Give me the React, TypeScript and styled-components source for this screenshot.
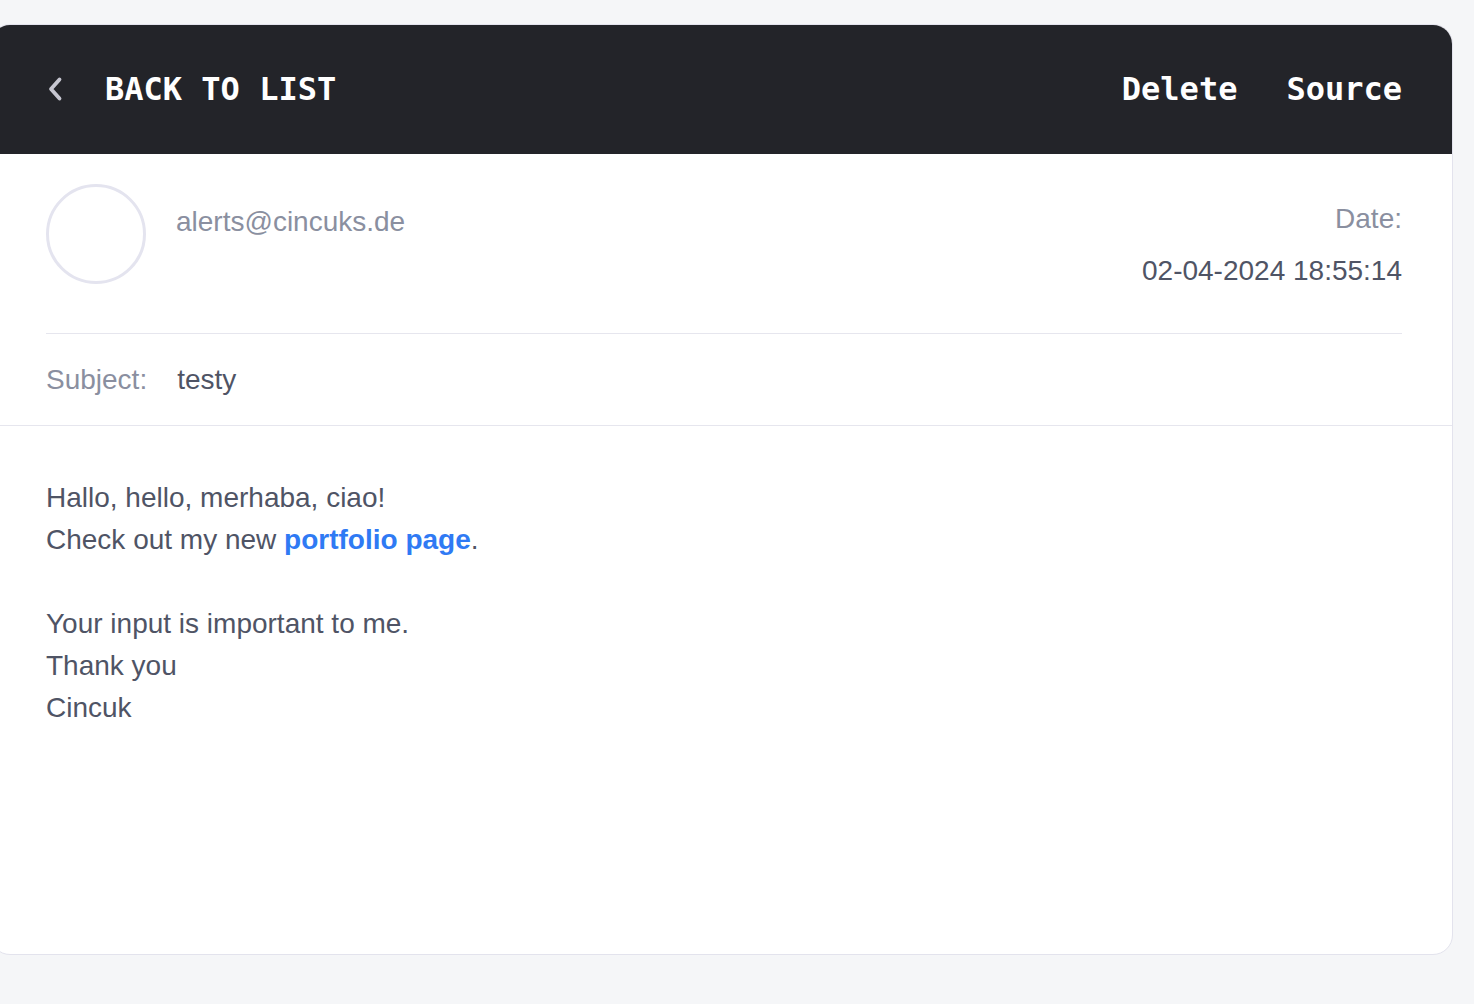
import React from "react";
import styled, { createGlobalStyle } from "styled-components";

const GlobalStyle = createGlobalStyle`
  html, body {
    margin: 0;
    padding: 0;
    background: #f5f6f8;
  }
  body {
    font-family: "Liberation Sans", Arial, Helvetica, sans-serif;
    overflow: hidden;
  }
`;

const Page = styled.div`
  width: 1474px;
  height: 1004px;
  box-sizing: border-box;
  padding: 24px 21px 0 0;
  background: #f5f6f8;
  display: flex;
  align-items: flex-start;
`;

const Card = styled.div`
  margin-left: -10px;
  flex: 1;
  height: 931px;
  box-sizing: border-box;
  background: #ffffff;
  border: 1px solid #e3e3ed;
  border-radius: 20px;
  overflow: hidden;
  display: flex;
  flex-direction: column;
`;

const Toolbar = styled.div`
  height: 130px;
  flex-shrink: 0;
  background: #232429;
  display: flex;
  align-items: center;
  justify-content: space-between;
  padding: 0 51px 0 57px;
  margin: -1px -1px 0 -1px;
  font-family: "DejaVu Sans Mono", "Liberation Mono", monospace;
  font-weight: bold;
  font-size: 32px;
  color: #ffffff;
`;

const BackLink = styled.a`
  display: flex;
  align-items: center;
  gap: 42px;
  color: #ffffff;
  text-decoration: none;
  cursor: pointer;
`;

const Actions = styled.div`
  display: flex;
  align-items: center;
  gap: 49px;
`;

const Action = styled.a`
  color: #ffffff;
  text-decoration: none;
  cursor: pointer;
`;

const Meta = styled.div`
  padding: 0 50px 0 55px;
  border-bottom: 1px solid #e6e6ee;
`;

const SenderRow = styled.div`
  display: flex;
  align-items: flex-start;
  padding: 30px 0 41px;
  border-bottom: 1px solid #e6e6ee;
`;

const Avatar = styled.div`
  width: 100px;
  height: 100px;
  box-sizing: border-box;
  border-radius: 50%;
  border: 3px solid #e4e4ef;
  flex-shrink: 0;
`;

const Sender = styled.div`
  margin-left: 30px;
  margin-top: 17px;
  flex: 1;
  font-size: 28px;
  line-height: 42px;
  color: #8a8fa0;
`;

const DateBlock = styled.div`
  margin-top: 14px;
  display: flex;
  flex-direction: column;
  align-items: flex-end;
  gap: 10px;
  font-size: 28px;
  line-height: 42px;
`;

const Label = styled.span`
  color: #8a8fa0;
`;

const Value = styled.span`
  color: #4f5465;
`;

const SubjectRow = styled.div`
  display: flex;
  gap: 30px;
  padding: 25px 0 24px;
  font-size: 28px;
  line-height: 42px;
`;

const Body = styled.div`
  flex: 1;
  padding: 51px 55px 0;
  font-size: 28px;
  line-height: 42px;
  color: #4f5465;
`;

const Line = styled.div`
  min-height: 42px;
`;

const Link = styled.a`
  color: #2f7af4;
  font-weight: bold;
  text-decoration: none;
`;

const Chevron = () => (
  <svg width="16" height="26" viewBox="0 0 16 26" fill="none">
    <path
      d="M12.5 3.5 L4 13 L12.5 22.5"
      stroke="#c6c6d0"
      strokeWidth="3.8"
      strokeLinecap="round"
      strokeLinejoin="round"
    />
  </svg>
);

export default function App() {
  return (
    <>
      <GlobalStyle />
      <Page>
        <Card>
          <Toolbar>
            <BackLink>
              <Chevron />
              <span>BACK TO LIST</span>
            </BackLink>
            <Actions>
              <Action>Delete</Action>
              <Action>Source</Action>
            </Actions>
          </Toolbar>
          <Meta>
            <SenderRow>
              <Avatar />
              <Sender>alerts@cincuks.de</Sender>
              <DateBlock>
                <Label>Date:</Label>
                <Value>02-04-2024 18:55:14</Value>
              </DateBlock>
            </SenderRow>
            <SubjectRow>
              <Label>Subject:</Label>
              <Value>testy</Value>
            </SubjectRow>
          </Meta>
          <Body>
            <Line>Hallo, hello, merhaba, ciao!</Line>
            <Line>
              Check out my new <Link>portfolio page</Link>.
            </Line>
            <Line />
            <Line>Your input is important to me.</Line>
            <Line>Thank you</Line>
            <Line>Cincuk</Line>
          </Body>
        </Card>
      </Page>
    </>
  );
}
